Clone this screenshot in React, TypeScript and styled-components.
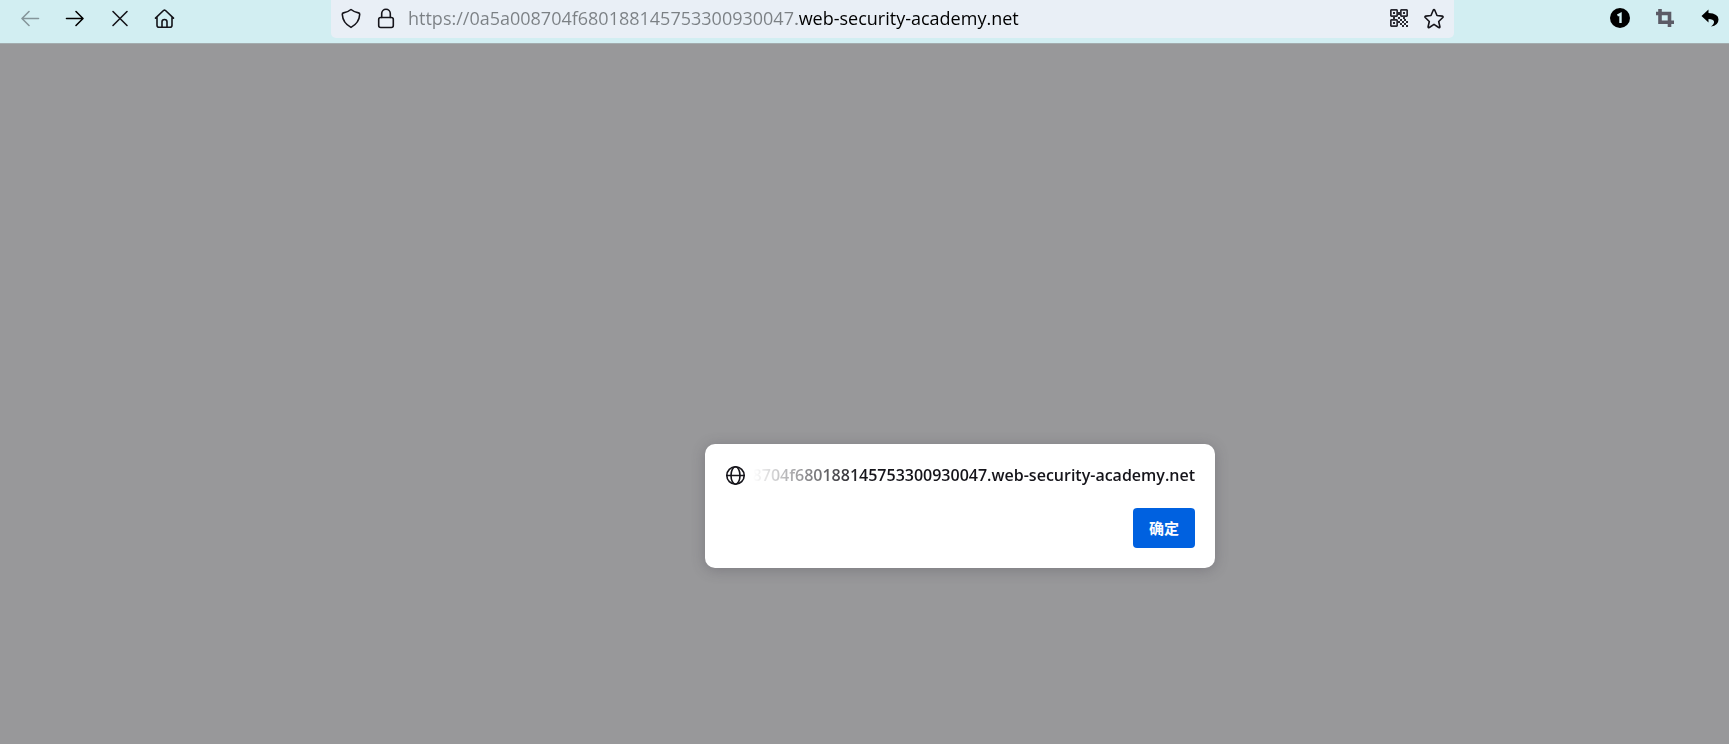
import React from "react";
import styled, { createGlobalStyle } from "styled-components";

const latin = `"Open Sans", "Noto Sans", "Noto Sans CJK SC", sans-serif`;

const GlobalStyle = createGlobalStyle`
  *, *::before, *::after { box-sizing: border-box; }
  body { margin: 0; background: #98989a; font-family: ${latin}; }
`;

const Browser = styled.div`
  display: flex;
  flex-direction: column;
  min-height: 100vh;
`;

const Toolbar = styled.header`
  display: flex;
  align-items: flex-start;
  justify-content: space-between;
  gap: 147px;
  padding: 0 0 5px 11px;
  background: #d2eef2;
  border-bottom: 1px solid #a3acae;
`;

const ToolGroup = styled.div`
  display: flex;
  gap: 7px;
`;

const IconButton = styled.button<{ $width?: number }>`
  display: flex;
  align-items: center;
  justify-content: center;
  flex: none;
  width: ${(p) => p.$width ?? 38}px;
  height: 38px;
  padding: 0;
  border: 0;
  border-radius: 4px;
  background: none;
  color: #15141a;
  &:disabled { opacity: 0.4; }
`;

const AddressBar = styled.div`
  display: flex;
  align-items: center;
  flex: 1;
  min-width: 0;
  height: 38px;
  padding: 0 3px 0 2px;
  border-radius: 0 0 5px 5px;
  background: #e9eff6;
`;

const AddressInput = styled.input`
  flex: 1;
  min-width: 0;
  height: 36px;
  margin-left: 5px;
  padding: 0 0 2px;
  border: 0;
  outline: 0;
  font: 18px/34px ${latin};
  color: #000;
  background: linear-gradient(to right, #7b8084 389px, #000 389px);
  background-clip: text;
  -webkit-background-clip: text;
  -webkit-text-fill-color: transparent;
`;

const Page = styled.main`
  display: flex;
  justify-content: center;
  align-items: flex-start;
  flex: 1;
  padding: 400px 0 0 191px;
  background: #98989a;
`;

const Dialog = styled.section`
  display: flex;
  flex-direction: column;
  gap: 18px;
  width: 510px;
  padding: 20px;
  border-radius: 10px;
  background: #fff;
  box-shadow: 0 2px 14px rgba(58, 57, 68, 0.3);
`;

const DialogHeader = styled.div`
  display: flex;
  align-items: center;
  gap: 8px;
  height: 22px;
  color: #15141a;
`;

const Host = styled.h1`
  display: flex;
  justify-content: flex-end;
  flex: 1;
  min-width: 0;
  margin: 0;
  overflow: hidden;
  font: 600 16px/22px ${latin};
  white-space: nowrap;
  mask-image: linear-gradient(to right, transparent, #000 110px);
`;

const DialogActions = styled.div`
  display: flex;
  justify-content: flex-end;
  padding-top: 4px;
`;

const PrimaryButton = styled.button`
  width: 62px;
  height: 40px;
  padding: 0;
  border: 0;
  border-radius: 4px;
  background: #0061e0;
  color: #fbfbfe;
  font: 700 15px/20px "Noto Sans CJK SC", sans-serif;
`;

const Glyph = styled.svg`
  display: block;
  flex: none;
  overflow: visible;
  fill: none;
  stroke: currentColor;
  stroke-width: 1.6;
  stroke-linecap: round;
  stroke-linejoin: round;
`;

const Icon = ({ children }: { children: React.ReactNode }) => (
  <Glyph width="20" height="20" viewBox="0 0 20 20" aria-hidden="true">
    {children}
  </Glyph>
);

const finders = [[1, 0], [11, 0], [1, 10]];

const QrIcon = () => (
  <Icon>
    <g stroke="none" fill="#2a2a32">
      {finders.map(([x, y]) => (
        <g key={`${x}-${y}`}>
          <path
            fillRule="evenodd"
            d={`M${x + 1} ${y}h6l1 1v6l-1 1h-6l-1-1v-6zM${x + 1.7} ${y + 1.7}v4.600h4.600v-4.600z`}
          />
          <rect x={x + 3} y={y + 3} width="2" height="2" />
        </g>
      ))}
      <path d="M9 3h2v2H9zM4 8h2v2H4zM14 8h2v2h-2zM9 8h2v2H9zM11 10h2v2h-2zM15 10h2v2h-2zM9 12h2v2H9zM13 12h2v2h-2zM17 12h2v2h-2zM11 14h2v2h-2zM15 14h2v2h-2zM13 16h2v2h-2zM17 16h2v2h-2zM9 5h2v1H9z" />
    </g>
  </Icon>
);

export default function App() {
  return (
    <>
      <GlobalStyle />
      <Browser>
        <Toolbar>
          <ToolGroup>
            <IconButton aria-label="后退" disabled>
              <Icon><path d="M18.500 9.500H2.200M9 2.500l-7 7 7 7" /></Icon>
            </IconButton>
            <IconButton aria-label="前进">
              <Icon><path stroke="#000" d="M1.500 9.500h16.300M11 2.500l7 7-7 7" /></Icon>
            </IconButton>
            <IconButton aria-label="停止">
              <Icon><path d="M3 2.500l14 14M17 2.500l-14 14" /></Icon>
            </IconButton>
            <IconButton aria-label="主页">
              <Icon>
                <path d="M.5 9.200l8-7.700q1-.8 2 0l8 7.700M2 8v8.200q0 2 2 2h11q2 0 2-2V8M7 18v-5.200q0-2.300 2.500-2.300t2.500 2.300V18" />
              </Icon>
            </IconButton>
          </ToolGroup>
          <AddressBar>
            <IconButton $width={36} aria-label="跟踪保护">
              <Icon>
                <path d="M10 .5Q13 3 17.500 3.900q1.300.3 1.200 1.600-.5 8.500-8.700 12.900Q1.800 14 1.300 5.500 1.200 4.200 2.500 3.900 7 3 10 .5z" />
              </Icon>
            </IconButton>
            <IconButton $width={34} aria-label="网站信息">
              <Icon>
                <rect x="2.700" y="8.500" width="14.600" height="10" rx="2" />
                <path d="M5.700 8.500V4.500a4.300 4.300 0 0 1 8.600 0v4" />
              </Icon>
            </IconButton>
            <AddressInput
              aria-label="网址"
              spellCheck={false}
              defaultValue="https://0a5a008704f680188145753300930047.web-security-academy.net"
            />
            <IconButton $width={35} aria-label="二维码">
              <QrIcon />
            </IconButton>
            <IconButton $width={35} aria-label="收藏">
              <Icon>
                <path d="M9.200 1.200q.8-1.200 1.600 0l2.200 5.300 5.300.6q1.300.4.5 1.400l-4.100 4 1.200 5.200q0 1.200-1.200.8L10 15.300l-4.700 3.200q-1.200.4-1.200-.8l1.200-5.200-4.100-4q-.8-1 .5-1.400l5.300-.6z" />
              </Icon>
            </IconButton>
          </AddressBar>
          <ToolGroup>
            <IconButton aria-label="密码管理">
              <Icon>
                <circle cx="10" cy="9" r="10" fill="#000" stroke="none" />
                <path stroke="#d2eef2" strokeWidth="2.400" strokeLinecap="butt" strokeLinejoin="miter" d="M7.500 6.500L10.500 5v9" />
              </Icon>
            </IconButton>
            <IconButton aria-label="截图">
              <Icon>
                <path stroke="#5b5b66" strokeWidth="3.600" strokeLinecap="butt" strokeLinejoin="miter" d="M5 0v13.200H19M1 4.500h13.500V18" />
              </Icon>
            </IconButton>
            <IconButton aria-label="撤销">
              <Icon>
                <path fill="#000" stroke="none" d="M8.500.5L1.500 7l7 6.500V10q5 0 5.500 2.500.4 2.500-3 5 7.500-1 7.500-7Q18.500 4.500 8.500 4z" />
              </Icon>
            </IconButton>
          </ToolGroup>
        </Toolbar>
        <Page>
          <Dialog role="dialog" aria-modal="true" aria-labelledby="dialog-host">
            <DialogHeader>
              <Icon>
                <circle cx="10.500" cy="10.500" r="8.700" />
                <ellipse cx="10.500" cy="10.500" rx="4.500" ry="8.700" />
                <path d="M2 10.500h17" />
              </Icon>
              <Host id="dialog-host">8704f680188145753300930047.web-security-academy.net</Host>
            </DialogHeader>
            <DialogActions>
              <PrimaryButton type="button">确定</PrimaryButton>
            </DialogActions>
          </Dialog>
        </Page>
      </Browser>
    </>
  );
}
